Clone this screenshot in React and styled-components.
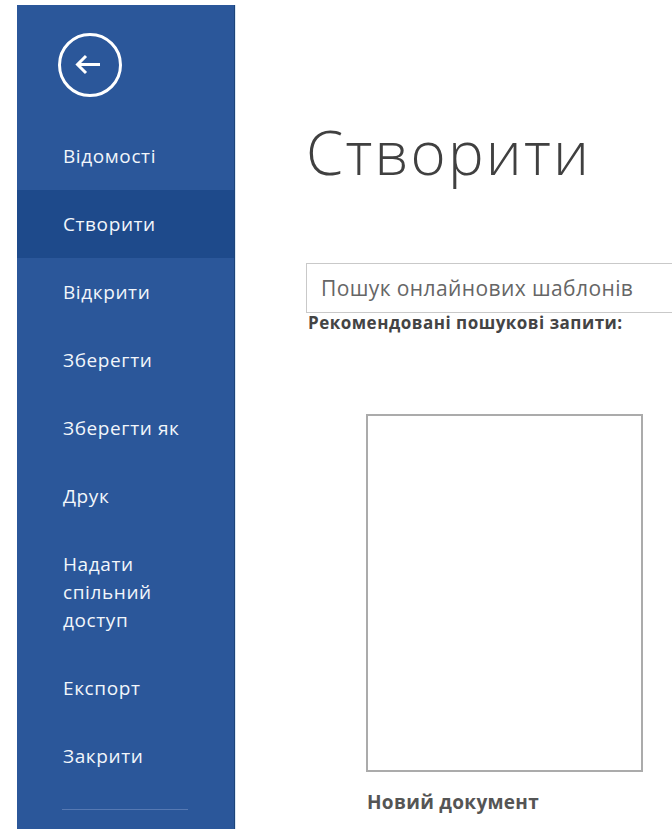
import React from "react";
import styled, { createGlobalStyle } from "styled-components";

const Global = createGlobalStyle`
  html, body {
    margin: 0;
    padding: 0;
    background: #ffffff;
  }
  body {
    font-family: "Open Sans", "Noto Sans", sans-serif;
    overflow: hidden;
  }
`;

const Shell = styled.div`
  display: flex;
  height: 100vh;
  padding: 5px 0 0 17px;
  box-sizing: border-box;
  overflow: hidden;
`;

const Sidebar = styled.nav`
  flex: none;
  width: 218px;
  background: #2b579a;
  border-right: 1px solid #1d4479;
  box-shadow: 1px 0 0 #dbe8f5;
  display: flex;
  flex-direction: column;
  padding-top: 28px;
  box-sizing: border-box;
`;

const BackButton = styled.button`
  width: 64px;
  height: 64px;
  margin: 0 0 25px 41px;
  padding: 0;
  border: none;
  background: none;
  cursor: pointer;
  display: block;
  svg {
    display: block;
  }
`;

const NavItem = styled.div`
  padding: 20px 12px 20px 46px;
  font-size: 19px;
  line-height: 28px;
  letter-spacing: 0.6px;
  color: #f2f6fb;
  background: ${(p) => (p.$active ? "#1e4a8b" : "transparent")};
  cursor: pointer;
`;

const Divider = styled.div`
  width: 126px;
  height: 1px;
  margin: 19px 0 0 45px;
  background: #5679b3;
`;

const Main = styled.main`
  flex: 1;
  min-width: 0;
  padding-left: 71px;
  overflow: hidden;
`;

const Title = styled.h1`
  margin: 117px 0 0;
  font-size: 60px;
  line-height: 60px;
  font-weight: 300;
  letter-spacing: 2.2px;
  color: #404040;
  white-space: nowrap;
`;

const SearchBox = styled.div`
  width: 430px;
  height: 50px;
  margin-top: 81px;
  box-sizing: border-box;
  border: 1px solid #c9c9c9;
  padding-left: 14px;
  display: flex;
  align-items: center;
  font-size: 21px;
  letter-spacing: 0.4px;
  color: #666666;
  white-space: nowrap;
`;

const SuggestLabel = styled.div`
  margin: 0 0 0 2px;
  font-size: 17px;
  line-height: 20px;
  letter-spacing: 0.5px;
  font-weight: 700;
  color: #444444;
  white-space: nowrap;
`;

const TemplateCard = styled.div`
  margin: 81px 0 0 60px;
  width: 277px;
`;

const Thumb = styled.div`
  width: 277px;
  height: 358px;
  box-sizing: border-box;
  border: 2px solid #ababab;
  background: #ffffff;
`;

const CardCaption = styled.div`
  margin: 19px 0 0 1px;
  font-size: 19px;
  line-height: 22px;
  letter-spacing: 0.3px;
  font-weight: 700;
  color: #555555;
  white-space: nowrap;
`;

const navItems = [
  { label: "Відомості" },
  { label: "Створити", active: true },
  { label: "Відкрити" },
  { label: "Зберегти" },
  { label: "Зберегти як" },
  { label: "Друк" },
  { label: ["Надати", "спільний", "доступ"] },
  { label: "Експорт" },
  { label: "Закрити" },
];

function BackIcon() {
  return (
    <svg width="64" height="64" viewBox="0 0 64 64" fill="none">
      <circle cx="32" cy="32" r="30.5" stroke="#ffffff" strokeWidth="3" />
      <path d="M19 31.5H42" stroke="#ffffff" strokeWidth="3" />
      <path d="M28 23L19.5 31.5L28 40" stroke="#ffffff" strokeWidth="3" />
    </svg>
  );
}

export default function App() {
  return (
    <>
      <Global />
      <Shell>
        <Sidebar>
          <BackButton aria-label="Назад">
            <BackIcon />
          </BackButton>
          {navItems.map((item, i) => (
            <NavItem key={i} $active={item.active}>
              {Array.isArray(item.label)
                ? item.label.map((line) => <div key={line}>{line}</div>)
                : item.label}
            </NavItem>
          ))}
          <Divider />
        </Sidebar>
        <Main>
          <Title>Створити</Title>
          <SearchBox>Пошук онлайнових шаблонів</SearchBox>
          <SuggestLabel>Рекомендовані пошукові запити:</SuggestLabel>
          <TemplateCard>
            <Thumb />
            <CardCaption>Новий документ</CardCaption>
          </TemplateCard>
        </Main>
      </Shell>
    </>
  );
}
